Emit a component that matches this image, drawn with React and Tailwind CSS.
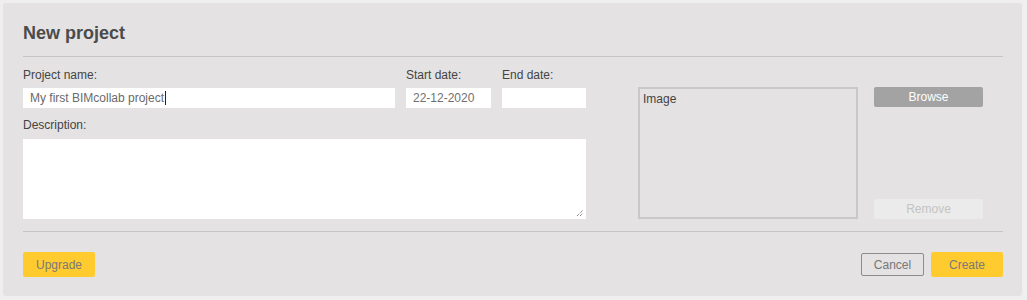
export default function App() {
  return (
    <div className="min-h-[300px] w-[1027px] bg-[#efefef] pt-[3px] pl-[3px] font-['Liberation_Sans',Arial,sans-serif]">
      <div className="flex h-[293px] w-[1019px] flex-col rounded-[3px] bg-[#e4e2e3] pl-[20px] pr-[19px] pt-[19px]">
        <h1 className="h-[22px] text-[18px] font-bold leading-[22px] text-[#4b4b4b]">New project</h1>
        <div className="mt-[12px] h-px bg-[#c7c5c6]" />

        <div className="mt-[11px] flex">
          {/* form fields */}
          <div className="flex w-[563px] flex-col">
            <div className="flex">
              <div className="flex w-[372px] flex-col">
                <label className="h-[14px] text-[12px] leading-[14px] text-[#444]">Project name:</label>
                <div className="mt-[6px] flex h-[20px] items-center bg-white pl-[7px] text-[12px] text-[#6a6a6a]">
                  My first BIMcollab project
                  <span className="ml-px h-[14px] w-px bg-[#222]" />
                </div>
              </div>
              <div className="ml-[11px] flex w-[85px] flex-col">
                <label className="h-[14px] text-[12px] leading-[14px] text-[#444]">Start date:</label>
                <div className="mt-[6px] flex h-[20px] items-center bg-white pl-[7px] text-[12px] text-[#707070]">
                  22-12-2020
                </div>
              </div>
              <div className="ml-[11px] flex w-[84px] flex-col">
                <label className="h-[14px] text-[12px] leading-[14px] text-[#444]">End date:</label>
                <div className="mt-[6px] h-[20px] bg-white" />
              </div>
            </div>
            <label className="mt-[10px] h-[14px] text-[12px] leading-[14px] text-[#444]">Description:</label>
            <div className="relative mt-[7px] h-[80px] bg-white">
              <svg className="absolute bottom-[2px] right-[2px]" width="8" height="8" viewBox="0 0 8 8">
                <path d="M1 7 L7 1 M4 7 L7 4" stroke="#555" strokeWidth="1" strokeDasharray="1 1" />
              </svg>
            </div>
          </div>

          {/* image */}
          <div className="ml-[52px] mt-[19px] h-[132px] w-[220px] border-2 border-[#c9c7c8] px-[3px] pt-[3px] text-[12px] leading-[14px] text-[#444]">
            Image
          </div>

          <div className="ml-[16px] mt-[19px] flex h-[132px] w-[109px] flex-col justify-between">
            <button className="h-[20px] rounded-[2px] bg-[#a3a3a3] text-[12px] leading-[20px] text-white">Browse</button>
            <button className="h-[20px] rounded-[2px] bg-[#ebebeb] text-[12px] leading-[20px] text-[#c4c4c4]">Remove</button>
          </div>
        </div>

        <div className="mt-[12px] h-px bg-[#c7c5c6]" />

        <div className="mt-[20px] flex items-center">
          <button className="h-[25px] w-[72px] rounded-[2px] bg-[#ffcb2f] text-[12px] text-[#7a7a7a]">Upgrade</button>
          <div className="flex-1" />
          <button className="h-[23px] w-[63px] rounded-[2px] border border-[#8c8c8c] text-[12px] text-[#777]">Cancel</button>
          <button className="ml-[7px] h-[25px] w-[72px] rounded-[2px] bg-[#ffcb2f] text-[12px] text-[#7a7a7a]">Create</button>
        </div>
      </div>
    </div>
  )
}
